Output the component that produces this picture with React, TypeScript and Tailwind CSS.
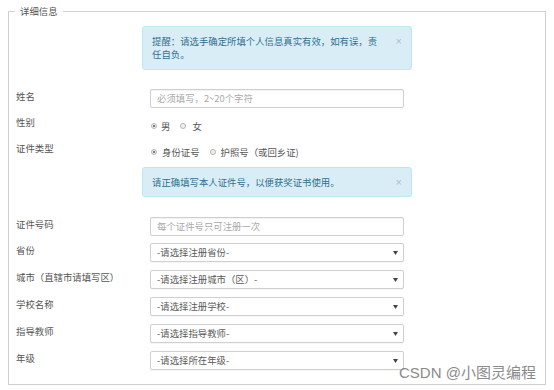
import React from "react";

const font = { fontFamily: '"Noto Sans CJK SC", "Noto Sans", sans-serif' };

function Radio({ checked }: { checked?: boolean }) {
  return (
    <span className="inline-flex items-center justify-center w-[6px] h-[6px] rounded-full border border-[#b5b5b5] bg-[#f0f0f0] shrink-0">
      {checked ? <span className="block w-[2px] h-[2px] rounded-full bg-[#555]" /> : null}
    </span>
  );
}

function Arrow() {
  return (
    <svg width="5" height="4" viewBox="0 0 5 4" className="shrink-0">
      <path d="M0 0 L5 0 L2.5 4 Z" fill="#444" />
    </svg>
  );
}

function Label({ children }: { children: React.ReactNode }) {
  return (
    <div className="w-[134px] shrink-0 mt-[1px] text-[9.4px] leading-[12px] text-[#555]">{children}</div>
  );
}

function InputRow({ label, placeholder, mt }: { label: string; placeholder: string; mt: string }) {
  return (
    <div className={`flex items-start ${mt}`}>
      <Label>{label}</Label>
      <div className="w-[254px] h-[19px] border border-[#cfcfcf] rounded-[2px] bg-white flex items-center pl-[6px] text-[9.4px] text-[#aaa] shadow-[inset_0_1px_1px_rgba(0,0,0,0.05)]">
        {placeholder}
      </div>
    </div>
  );
}

function SelectRow({ label, value, mt }: { label: string; value: string; mt: string }) {
  return (
    <div className={`flex items-start ${mt}`}>
      <Label>{label}</Label>
      <div className="w-[254px] h-[19px] border border-[#cfcfcf] rounded-[2px] bg-white flex items-center justify-between pl-[6px] pr-[5px] text-[9.4px] text-[#5a5a5a] shadow-[0_1px_1px_rgba(0,0,0,0.04)]">
        <span>{value}</span>
        <Arrow />
      </div>
    </div>
  );
}

function Alert({ children, h, mt, textTop }: { children: React.ReactNode; h: string; mt: string; textTop: string }) {
  return (
    <div className={`ml-[133px] w-[270px] ${h} ${mt} bg-[#d9edf7] border border-[#bce8f1] rounded-[3px] flex items-start justify-between pl-[9px] pr-[9px] ${textTop}`}>
      <div className="w-[228px] text-[9.4px] leading-[13px] text-[#31708f]">{children}</div>
      <span className="text-[11px] leading-[13px] text-black opacity-20" style={{ fontFamily: '"Liberation Sans", sans-serif' }}>×</span>
    </div>
  );
}

export default function App() {
  return (
    <div className="relative w-[554px] h-[390px] bg-white overflow-hidden" style={font}>
      <div className="pt-[11px] pl-[8px]">
        <div className="relative w-[538px] h-[374px] border border-[#d0d0d0]">
          <div className="absolute left-[6px] top-[-7px] px-[5px] bg-white text-[9.4px] leading-[12px] text-[#555]">详细信息</div>
          <div className="pl-[7px] pt-[14px]">
            <div className="-ml-[7px]">
              <Alert h="h-[44px]" mt="mt-0" textTop="pt-[8px]">
                提醒：请选手确定所填个人信息真实有效，如有误，责任自负。
              </Alert>
            </div>
            <InputRow label="姓名" placeholder="必须填写，2~20个字符" mt="mt-[19px]" />
            <div className="flex items-start mt-[8px]">
              <div className="w-[134px] shrink-0 text-[9.4px] leading-[12px] text-[#555]">性别</div>
              <div className="flex items-center mt-[4px] ml-[1px] text-[9.4px] leading-[12px] text-[#555]">
                <Radio checked />
                <span className="ml-[4px]">男</span>
                <span className="ml-[10px] flex items-center"><Radio /></span>
                <span className="ml-[6px]">女</span>
              </div>
            </div>
            <div className="flex items-start mt-[10px]">
              <div className="w-[134px] shrink-0 text-[9.4px] leading-[12px] text-[#555]">证件类型</div>
              <div className="flex items-center mt-[4px] ml-[1px] text-[9.4px] leading-[12px] text-[#555]">
                <Radio checked />
                <span className="ml-[5px]">身份证号</span>
                <span className="ml-[10px] flex items-center"><Radio /></span>
                <span className="ml-[5px]">护照号（或回乡证)</span>
              </div>
            </div>
            <div className="-ml-[7px]">
              <Alert h="h-[30px]" mt="mt-[9px]" textTop="pt-[8px]">
                请正确填写本人证件号，以便获奖证书使用。
              </Alert>
            </div>
            <InputRow label="证件号码" placeholder="每个证件号只可注册一次" mt="mt-[20px]" />
            <SelectRow label="省份" value="-请选择注册省份-" mt="mt-[7px]" />
            <SelectRow label="城市（直辖市请填写区）" value="-请选择注册城市（区）-" mt="mt-[8px]" />
            <SelectRow label="学校名称" value="-请选择注册学校-" mt="mt-[8px]" />
            <SelectRow label="指导教师" value="-请选择指导教师-" mt="mt-[8px]" />
            <SelectRow label="年级" value="-请选择所在年级-" mt="mt-[8px]" />
          </div>
        </div>
      </div>
      <div
        className="absolute left-[399px] top-[363px] text-[15px] leading-[20px] text-[#8a8a8a]"
        style={{ fontFamily: '"Liberation Sans", "Noto Sans CJK SC", sans-serif' }}
      >
        CSDN @小图灵编程
      </div>
    </div>
  );
}
